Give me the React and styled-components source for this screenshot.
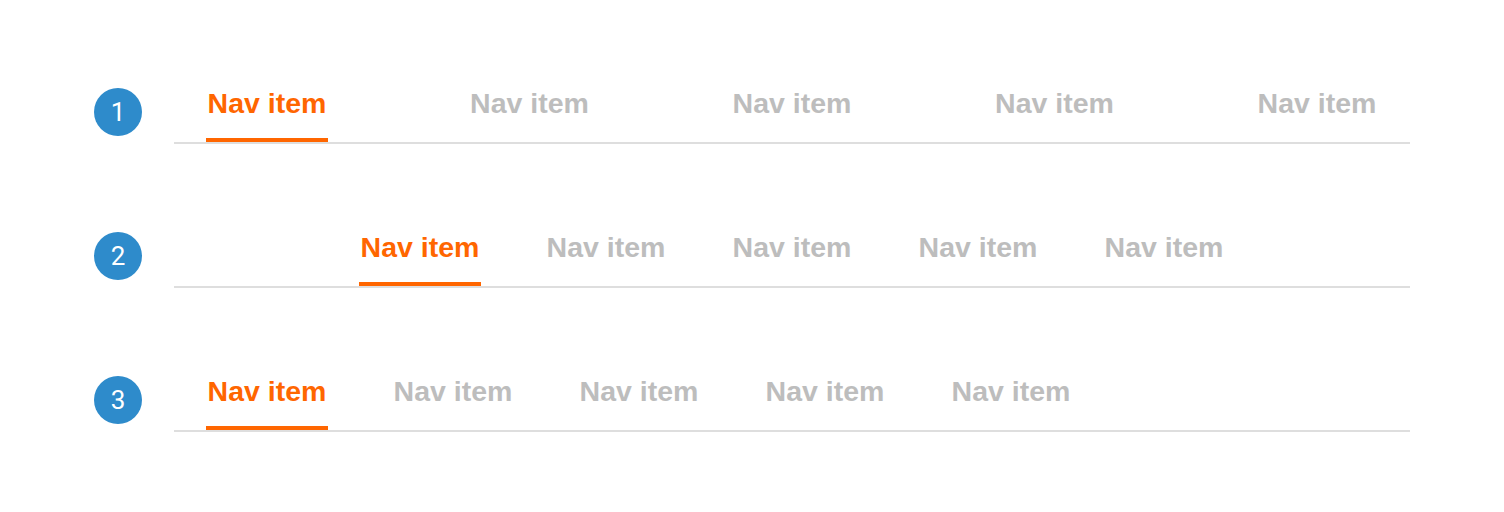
import React from "react";
import styled, { createGlobalStyle } from "styled-components";

const GlobalStyle = createGlobalStyle`
  html, body { margin: 0; padding: 0; background: #ffffff; }
  body { font-family: "Liberation Sans", Arial, sans-serif; }
`;

const Page = styled.div`
  width: 1504px;
  height: 512px;
  box-sizing: border-box;
  padding: 86px 0 0 94px;
  display: flex;
  flex-direction: column;
  gap: 86px;
`;

const Row = styled.div`
  display: flex;
  align-items: flex-start;
  gap: 32px;
`;

const Badge = styled.div`
  width: 48px;
  height: 48px;
  margin-top: 2px;
  border-radius: 50%;
  background: #2e8bcb;
  color: #ffffff;
  display: flex;
  align-items: center;
  justify-content: center;
  font-family: Roboto, "Liberation Sans", sans-serif;
  font-size: 26px;
  font-weight: 400;
  flex-shrink: 0;
`;

const Nav = styled.nav`
  width: 1236px;
  box-sizing: border-box;
  border-bottom: 2px solid #dedede;
  display: flex;
  justify-content: ${(p) => p.$justify};
  gap: ${(p) => (p.$justify === "space-between" ? "0" : "64px")};
  padding: ${(p) => (p.$justify === "center" ? "0" : "0 32px")};
`;

const Item = styled.a`
  width: 122px;
  box-sizing: border-box;
  padding-top: 1px;
  padding-bottom: 19px;
  border-bottom: 4px solid ${(p) => (p.$active ? "#ff6600" : "transparent")};
  text-align: center;
  font-size: 28.5px;
  line-height: 32px;
  font-weight: 700;
  color: ${(p) => (p.$active ? "#ff6600" : "#bdbdbd")};
  text-decoration: none;
  cursor: pointer;
  white-space: nowrap;
`;

const rows = [
  { n: 1, justify: "space-between" },
  { n: 2, justify: "center" },
  { n: 3, justify: "flex-start" },
];

export default function App() {
  return (
    <>
      <GlobalStyle />
      <Page>
        {rows.map((r) => (
          <Row key={r.n}>
            <Badge>{r.n}</Badge>
            <Nav $justify={r.justify}>
              {[0, 1, 2, 3, 4].map((i) => (
                <Item key={i} $active={i === 0}>
                  Nav item
                </Item>
              ))}
            </Nav>
          </Row>
        ))}
      </Page>
    </>
  );
}
